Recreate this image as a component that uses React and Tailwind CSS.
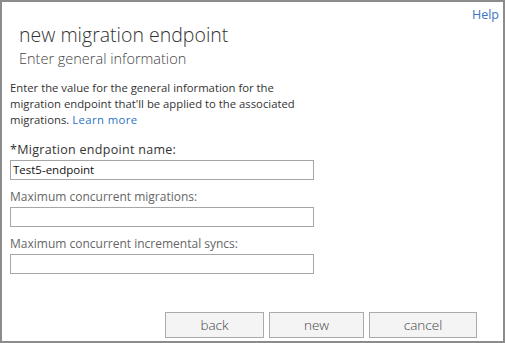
export default function App() {
  const font = { fontFamily: '"Open Sans", "Noto Sans", Arial, sans-serif' };
  return (
    <div className="w-[505px] h-[343px] bg-white border-2 border-[#8c8c8c] flex flex-col text-[#333]" style={font}>
      <div className="flex justify-end pr-[4px] pt-[5px] h-[20px]">
        <a className="text-[12.5px] leading-[16px] text-[#3b73c6]">Help</a>
      </div>
      <div className="pl-[17px]">
        <div className="text-[19.5px] leading-[26px] font-light text-[#333]">new migration endpoint</div>
        <div className="text-[14.5px] leading-[20px] font-light text-[#444] mt-[1px]">Enter general information</div>
      </div>
      <div className="px-[8px] mt-[11px]">
        <p className="text-[11.3px] leading-[16px] text-[#333] w-[302px]">
          Enter the value for the general information for the migration endpoint that'll be applied to the associated migrations.{' '}
          <a className="text-[#2c72c7] tracking-[0.4px]">Learn more</a>
        </p>
        <div className="mt-[14px] flex flex-col">
          <label className="text-[12.5px] leading-[16px] text-[#333] tracking-[0.3px]">*Migration endpoint name:</label>
          <div className="mt-[2px] w-[304px] h-[20px] border border-[#a6a6a6] bg-white flex items-center px-[2px] text-[11.5px] text-[#111]">Test5-endpoint</div>
          <label className="mt-[9px] text-[12px] leading-[16px] text-[#666]">Maximum concurrent migrations:</label>
          <div className="mt-[2px] w-[304px] h-[20px] border border-[#a6a6a6] bg-white"></div>
          <label className="mt-[9px] text-[12px] leading-[16px] text-[#666]">Maximum concurrent incremental syncs:</label>
          <div className="mt-[2px] w-[304px] h-[20px] border border-[#a6a6a6] bg-white"></div>
        </div>
      </div>
      <div className="flex-1"></div>
      <div className="flex justify-end gap-[5px] pr-[26px] pb-[3px]">
        <button className="w-[99px] h-[26px] border border-[#ababab] bg-[#f4f4f4] text-[13.5px] text-[#444] font-light">back</button>
        <button className="w-[95px] h-[26px] border border-[#ababab] bg-[#f4f4f4] text-[13.5px] text-[#444] font-light">new</button>
        <button className="w-[108px] h-[26px] border border-[#ababab] bg-[#f4f4f4] text-[13.5px] text-[#444] font-light">cancel</button>
      </div>
    </div>
  );
}
